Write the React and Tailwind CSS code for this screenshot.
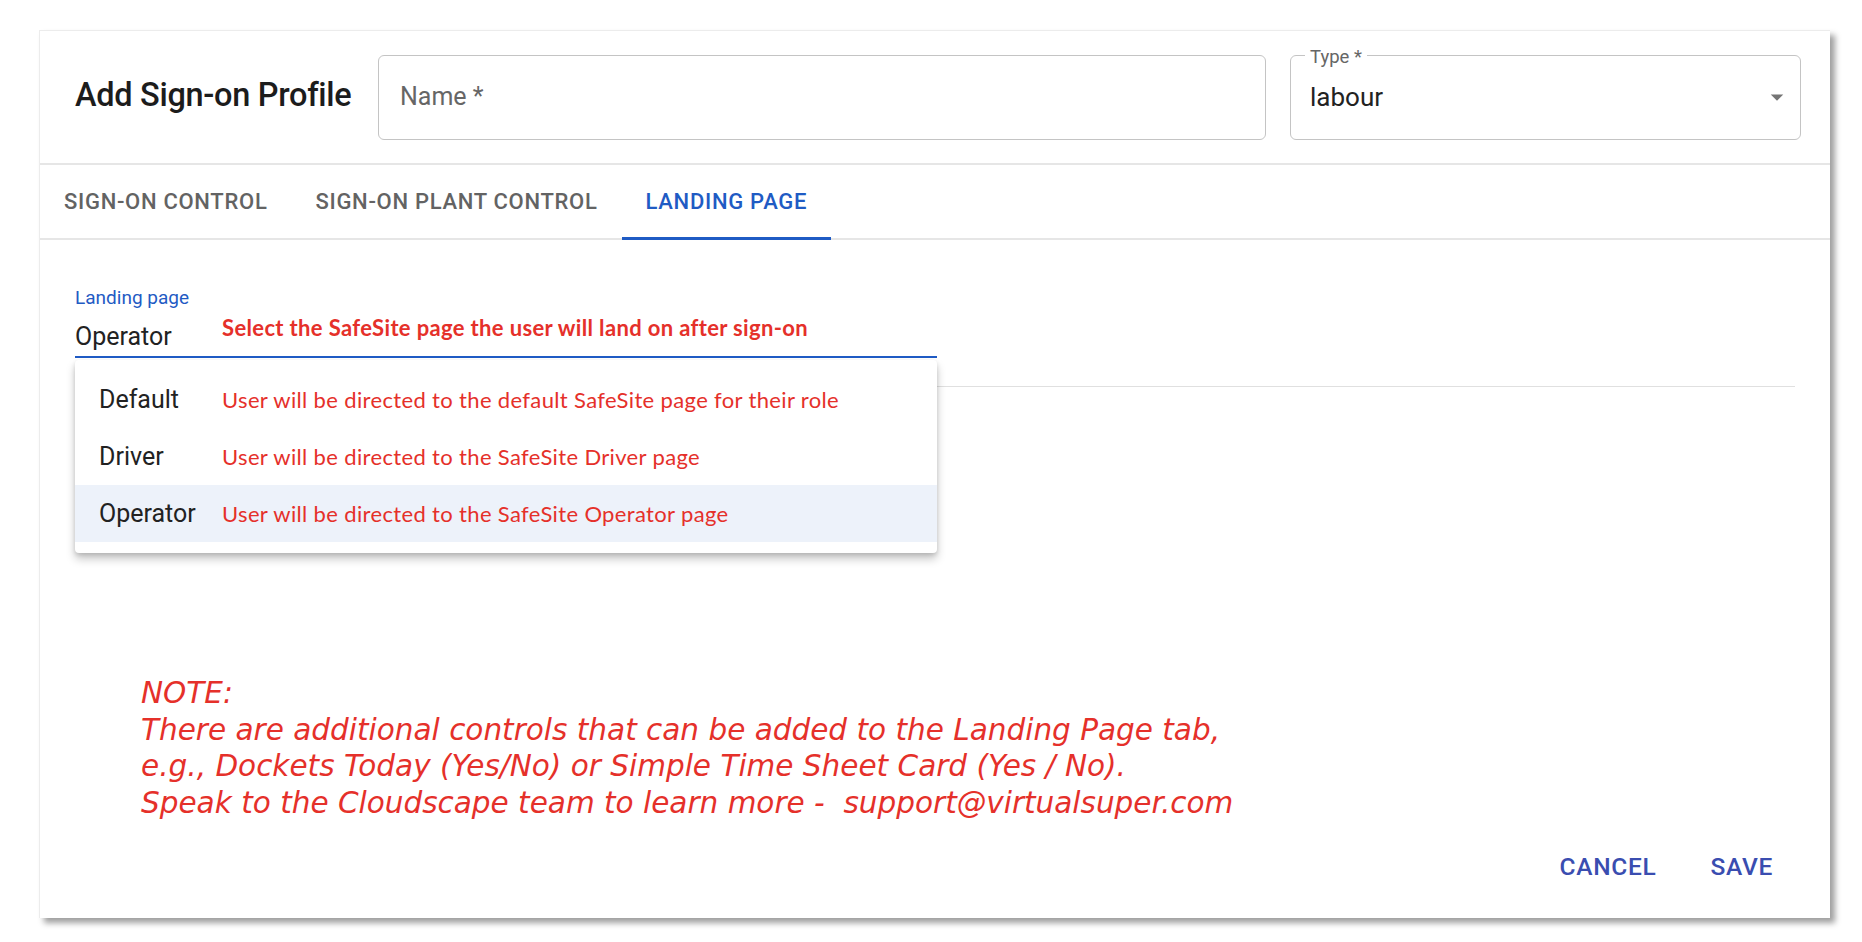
import React, { useState } from 'react';

const tabs = ['Sign-on Control', 'Sign-on Plant Control', 'Landing Page'];

const options = [
    { label: 'Default', note: 'User will be directed to the default SafeSite page for their role' },
    { label: 'Driver', note: 'User will be directed to the SafeSite Driver page' },
    { label: 'Operator', note: 'User will be directed to the SafeSite Operator page' },
];

const ui = { fontFamily: 'Roboto, "Liberation Sans", sans-serif' };
const hint = { fontFamily: 'Lato, "Open Sans", sans-serif' };
const note = { fontFamily: '"DejaVu Sans", Lato, sans-serif' };

const App = () => {
    const [tab] = useState(2);
    const [value] = useState('Operator');

    return (
        <div className="min-h-screen bg-white pt-[30px] pl-[39px]" style={ui}>
            {/* Dialog card */}
            <div className="w-[1791px] h-[888px] bg-white border-t border-l border-[#ececec] shadow-[5px_5px_6px_rgba(0,0,0,0.38)] flex flex-col">
                {/* Header */}
                <div className="flex items-center h-[134px] pl-[35px] pr-[29px] border-b-2 border-[#e6e6e6]">
                    <h1 className="text-[32.5px] font-medium text-[#1c1c1c] w-[303px] shrink-0 tracking-[-0.3px] -mt-[3px]">Add Sign-on Profile</h1>
                    <div className="w-[888px] h-[85px] rounded-[6px] border border-[#c4c4c4] flex items-center px-[21px]">
                        <span className="text-[25px] text-[#666]">Name *</span>
                    </div>
                    <div className="relative ml-[24px] w-[511px] h-[85px] rounded-[6px] border border-[#c4c4c4] flex items-center pl-[19px] pr-[8px]">
                        <span className="absolute -top-[12px] left-[14px] bg-white px-[5px] text-[18.5px] text-[#666]">Type *</span>
                        <span className="flex-1 text-[26px] text-[#222]">labour</span>
                        <svg width="30" height="30" viewBox="0 0 24 24" fill="#757575">
                            <path d="M7 10l5 5 5-5z" />
                        </svg>
                    </div>
                </div>

                {/* Tabs */}
                <div className="flex h-[75px] border-b-2 border-[#e6e6e6]">
                    {tabs.map((t, i) => (
                        <div
                            key={t}
                            className={`relative flex items-center px-[24px] text-[22px] font-medium uppercase tracking-[0.7px] ${i === tab ? 'text-[#1f5bc4]' : 'text-[#636363]'}`}
                        >
                            {t}
                            {i === tab && <div className="absolute left-0 right-0 -bottom-[2px] h-[3px] bg-[#1f5bc4]" />}
                        </div>
                    ))}
                </div>

                {/* Landing page panel */}
                <div className="relative px-[35px] pt-[46px]">
                    <div className="w-[862px]">
                        <div className="text-[19px] text-[#1f5bc4] leading-[24px]">Landing page</div>
                        <div className="flex items-center h-[48px] border-b-2 border-[#1f5bc4]">
                            <span className="w-[147px] text-[25px] text-[#222] pt-[8px]">{value}</span>
                            <span className="text-[22px] font-bold tracking-[0.35px] text-[#e5302a] -mt-[12px]" style={hint}>
                                Select the SafeSite page the user will land on after sign-on
                            </span>
                        </div>
                    </div>
                    <div className="mt-[28px] border-b border-[#e0e0e0]" />

                    {/* Open menu */}
                    <div className="absolute left-[35px] top-[120px] w-[862px] bg-white rounded-[4px] shadow-[0_6px_10px_rgba(0,0,0,0.22),0_2px_4px_rgba(0,0,0,0.12)] py-[11px]">
                        {options.map((o) => (
                            <div
                                key={o.label}
                                className={`flex items-center h-[57px] pl-[24px] ${o.label === value ? 'bg-[#edf2fa]' : ''}`}
                            >
                                <span className="w-[123px] text-[25px] text-[#222]">{o.label}</span>
                                <span className="text-[22px] tracking-[0.35px] text-[#e5302a]" style={hint}>{o.note}</span>
                            </div>
                        ))}
                    </div>
                </div>

                {/* Note */}
                <div className="mt-[288px] pl-[101px] text-[29.5px] italic leading-[36.7px] text-[#e5302a]" style={note}>
                    <p>NOTE:</p>
                    <p>There are additional controls that can be added to the Landing Page tab,</p>
                    <p>e.g., Dockets Today (Yes/No) or Simple Time Sheet Card (Yes / No).</p>
                    <p>Speak to the Cloudscape team to learn more -&nbsp; support@virtualsuper.com</p>
                </div>

                {/* Actions */}
                <div className="mt-auto mb-[24px] flex justify-end gap-[10px] pr-[35px]">
                    <button className="px-[22px] py-[8px] text-[24.5px] font-medium tracking-[0.7px] text-[#3a4db0] uppercase">Cancel</button>
                    <button className="px-[22px] py-[8px] text-[24.5px] font-medium tracking-[0.7px] text-[#3a4db0] uppercase">Save</button>
                </div>
            </div>
        </div>
    );
};

export default App;
